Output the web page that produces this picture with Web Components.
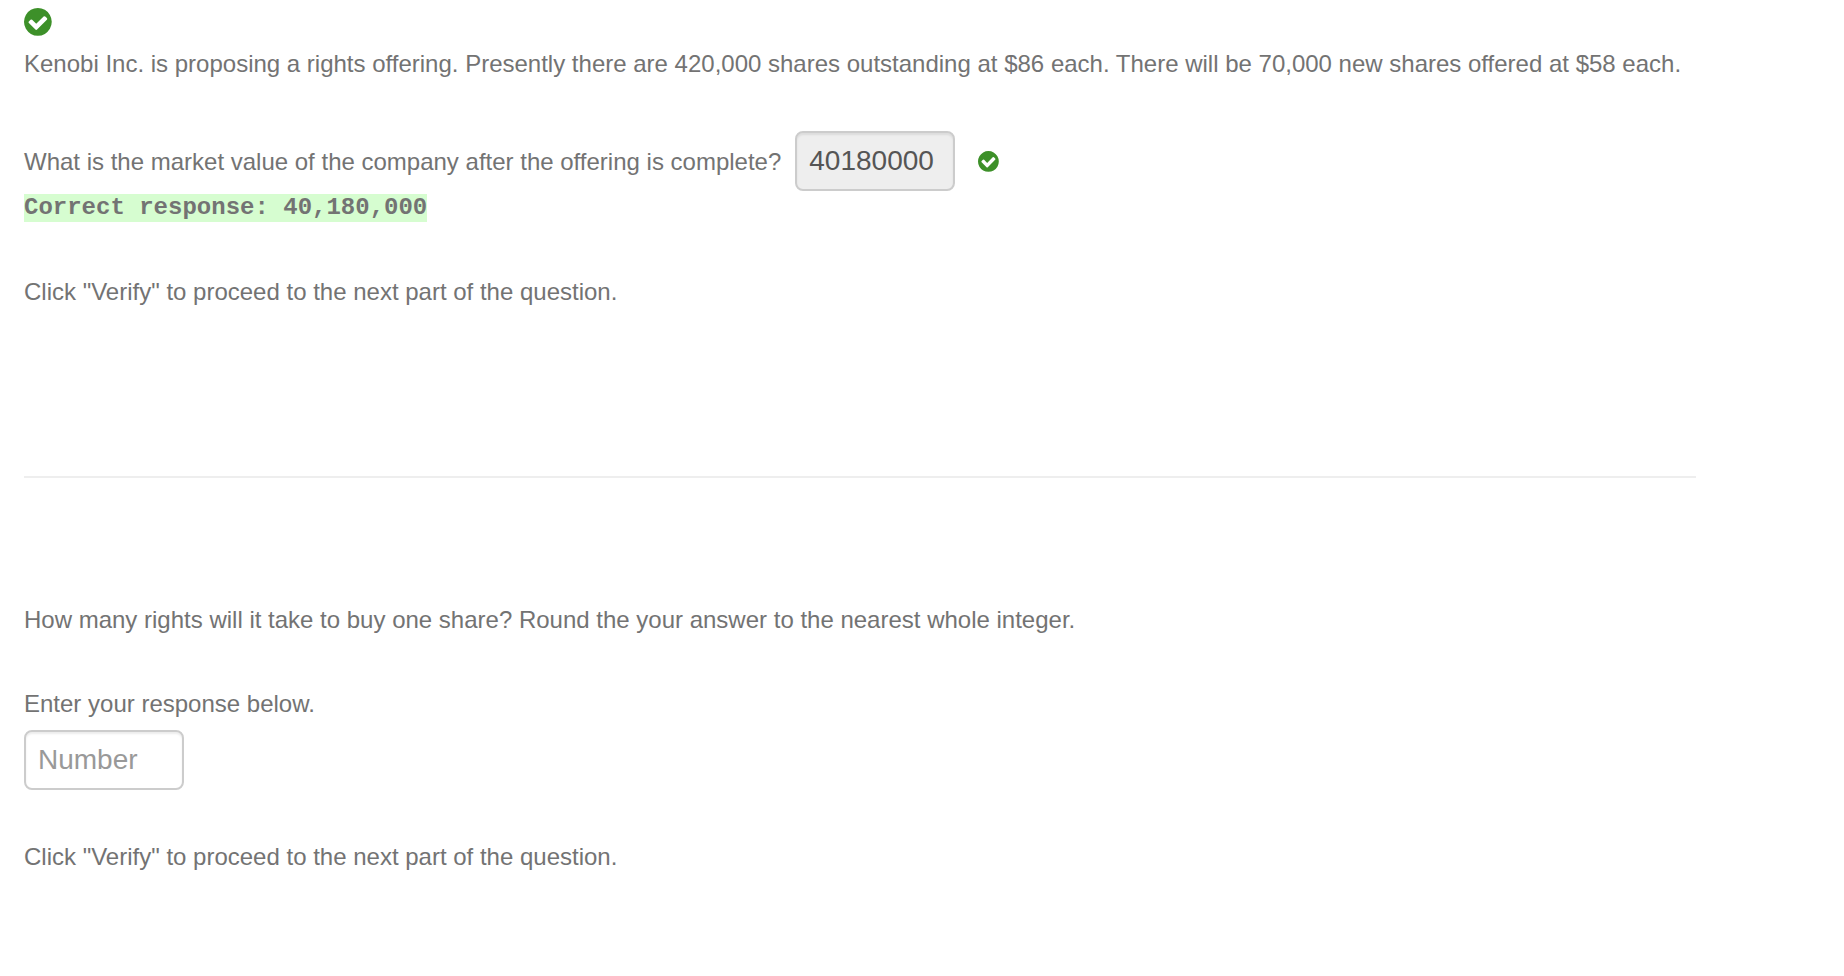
<!DOCTYPE html>
<html lang="en">
<head>
  <meta charset="utf-8">
  <meta name="viewport" content="width=device-width, initial-scale=1">
  <title>Rights offering</title>
  <style>
    body {
      margin: 0;
      background: #fff;
      color: #737373;
      font-family: "Helvetica Neue", Helvetica, "Liberation Sans", Arial, sans-serif;
      font-size: 24px;
      line-height: 28px;
    }
  </style>
</head>
<body>
  <quiz-page>
    <question-part>
      <status-icon slot="status" size="large"></status-icon>
      <p>Kenobi Inc. is proposing a rights offering. Presently there are 420,000 shares outstanding at $86 each. There will be 70,000 new shares offered at $58 each.</p>
      <number-answer inline correct label="What is the market value of the company after the offering is complete?" value="40180000" response="40,180,000"></number-answer>
      <p>Click "Verify" to proceed to the next part of the question.</p>
    </question-part>
    <part-divider></part-divider>
    <question-part>
      <p>How many rights will it take to buy one share? Round the your answer to the nearest whole integer.</p>
      <number-answer label="Enter your response below."></number-answer>
      <p>Click "Verify" to proceed to the next part of the question.</p>
    </question-part>
  </quiz-page>

  <script>
    class QuizPage extends HTMLElement {
      constructor() {
        super();
        this.attachShadow({ mode: 'open' });
        this.shadowRoot.innerHTML = `
          <style>
            :host {
              display: block;
              padding: 8px 8% 56px 24px;
            }
          </style>
          <main><slot></slot></main>
        `;
      }
    }

    class QuestionPart extends HTMLElement {
      constructor() {
        super();
        this.attachShadow({ mode: 'open' });
        this.shadowRoot.innerHTML = `
          <style>
            :host {
              display: block;
            }

            .content {
              display: flex;
              flex-direction: column;
              gap: 53px;
            }

            ::slotted(p) {
              margin: 0;
            }

            ::slotted(status-icon) {
              margin-bottom: 14px;
            }
          </style>
          <section>
            <slot name="status"></slot>
            <div class="content"><slot></slot></div>
          </section>
        `;
      }
    }

    // Green disc with a tick, shown next to anything answered correctly
    class StatusIcon extends HTMLElement {
      constructor() {
        super();
        this.attachShadow({ mode: 'open' });
        this.shadowRoot.innerHTML = `
          <style>
            :host {
              display: block;
              width: 21px;
              height: 21px;
              flex-shrink: 0;
            }

            :host([size="large"]) {
              width: 28px;
              height: 28px;
            }

            svg {
              display: block;
              width: 100%;
              height: 100%;
            }
          </style>
          <svg viewBox="0 0 1550 1550" role="img" aria-label="Correct">
            <path fill="#3d9029" d="M1284 606q0-28-18-46l-91-90q-19-19-45-19t-45 19l-408 407-226-226q-19-19-45-19t-45 19l-91 90q-18 18-18 46 0 27 18 45l362 362q19 19 45 19 27 0 46-19l543-543q18-18 18-45zm252 162q0 209-103 385.500t-279.500 279.500-385.500 103-385.500-103-279.500-279.500-103-385.500 103-385.500 279.500-279.500 385.500-103 385.500 103 279.500 279.500 103 385.500z" />
          </svg>
        `;
      }
    }

    class NumberAnswer extends HTMLElement {
      constructor() {
        super();
        this.attachShadow({ mode: 'open' });
      }

      connectedCallback() {
        this.render();
      }

      render() {
        const label = this.getAttribute('label') || '';
        const value = this.getAttribute('value') || '';
        const response = this.getAttribute('response') || '';
        const correct = this.hasAttribute('correct');

        this.shadowRoot.innerHTML = `
          <style>
            :host {
              display: block;
            }

            .field {
              display: flex;
              flex-direction: column;
              align-items: flex-start;
              gap: 12px;
              padding-top: 3px;
            }

            :host([inline]) .field {
              flex-direction: row;
              flex-wrap: wrap;
              align-items: baseline;
              column-gap: 14px;
              padding-top: 0;
            }

            .answer {
              display: flex;
              align-items: center;
              gap: 23px;
            }

            input {
              box-sizing: border-box;
              width: 160px;
              height: 60px;
              margin: 0;
              padding: 0 12px;
              border: 2px solid #ccc;
              border-radius: 8px;
              background: #fff;
              box-shadow: inset 0 2px 2px rgba(0, 0, 0, 0.075);
              color: #555;
              font-family: inherit;
              font-size: 28px;
            }

            input::placeholder {
              color: #999;
              opacity: 1;
            }

            input:disabled {
              background: #eee;
              opacity: 1;
            }

            .response {
              display: flex;
              padding: 3px 0;
            }

            code {
              background: #d6fdd0;
              font-family: "Courier New", "Liberation Mono", monospace;
              font-size: 24px;
              font-weight: 700;
            }
          </style>
          <div class="field">
            <label for="answer">${label}</label>
            <div class="answer">
              <input id="answer" type="text" inputmode="numeric" placeholder="Number" value="${value}" ${correct ? 'disabled' : ''}>
              ${correct ? '<status-icon></status-icon>' : ''}
            </div>
          </div>
          ${response ? `<div class="response"><code>Correct response: ${response}</code></div>` : ''}
        `;
      }
    }

    class PartDivider extends HTMLElement {
      constructor() {
        super();
        this.attachShadow({ mode: 'open' });
        this.shadowRoot.innerHTML = `
          <style>
            :host {
              display: block;
            }

            hr {
              margin: 170px 0 128px;
              border: 0;
              border-top: 2px solid #eee;
            }
          </style>
          <hr>
        `;
      }
    }

    customElements.define('quiz-page', QuizPage);
    customElements.define('question-part', QuestionPart);
    customElements.define('status-icon', StatusIcon);
    customElements.define('number-answer', NumberAnswer);
    customElements.define('part-divider', PartDivider);
  </script>
</body>
</html>
